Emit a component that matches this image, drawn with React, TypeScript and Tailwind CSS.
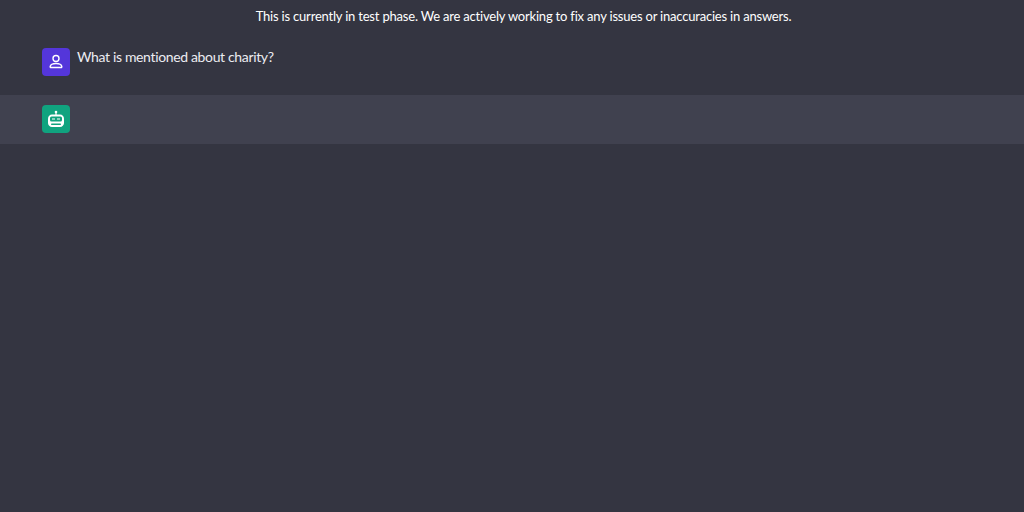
export default function App() {
  return (
    <div className="h-[512px] w-full overflow-hidden bg-[#343541] font-['Lato',sans-serif] text-[#ececf1]">
      {/* Notice */}
      <p className="pl-[23px] pt-[6px] text-center text-[13px] leading-[20px] tracking-[-0.2px] text-white">
        This is currently in test phase. We are actively working to fix any issues or inaccuracies in answers.
      </p>

      {/* Question */}
      <div className="flex h-[69px] gap-[7px] px-[42px] pt-[22px]">
        <div className="flex h-[28px] w-[28px] items-center justify-center rounded bg-[#5436da]">
          <svg width="16" height="16" viewBox="0 0 16 16" fill="none" stroke="white" strokeWidth="1.4">
            <circle cx="8" cy="4.500" r="3" />
            <path d="M3 13.500h10c.6 0 .9-.4.8-1-.4-2-2.300-3-5.800-3s-5.400 1-5.800 3c-.1.600.2 1 .8 1z" />
          </svg>
        </div>
        <p className="-mt-px text-[14px] leading-[20px] tracking-[-0.35px]">What is mentioned about charity?</p>
      </div>

      {/* Answer */}
      <div className="flex h-[49px] bg-[#40414f] px-[42px] pt-[10px]">
        <div className="flex h-[28px] w-[28px] items-center justify-center rounded bg-[#10a37f]">
          <svg width="20" height="20" viewBox="0 0 20 20" fill="white">
            <circle cx="10" cy="3" r="1.300" />
            <rect x="9.400" y="3" width="1.200" height="3" />
            <path d="M6 5.500h8c2.200 0 4 1.800 4 4V14c0 2.200-1.800 4-4 4H6c-2.200 0-4-1.800-4-4V9.500c0-2.200 1.800-4 4-4z" />
            <rect x="4" y="7.500" width="12" height="5" rx="1.500" fill="#10a37f" />
            <rect x="6" y="9.500" width="3" height="1" fill="white" />
            <rect x="11" y="9.500" width="3" height="1" fill="white" />
            <rect x="5" y="14.500" width="10" height="1.500" rx="0.700" fill="#10a37f" />
          </svg>
        </div>
      </div>
    </div>
  );
}
